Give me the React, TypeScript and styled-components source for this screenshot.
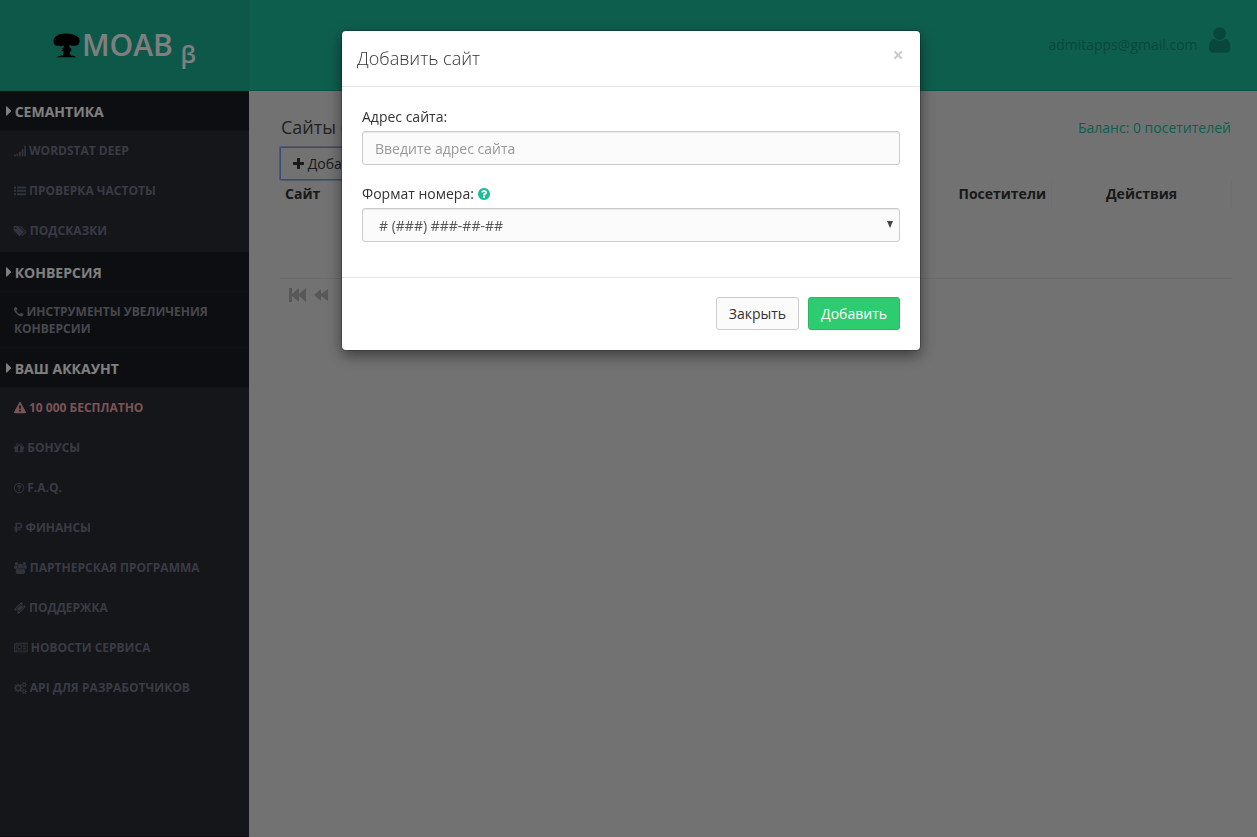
import React from "react";
import styled, { createGlobalStyle } from "styled-components";

const GlobalStyle = createGlobalStyle`
  * { box-sizing: border-box; }
  body {
    margin: 0;
    background: #e5e5e5;
    color: #333;
    font-family: "Open Sans", "Noto Sans", sans-serif;
    font-size: 14px;
    line-height: 20px;
  }
  button, input, select { font: inherit; }
`;

/* ---------- icons ---------- */

type Glyph = { x?: number; w: number; d: string };

const glyphs: Record<string, Glyph> = {
  signal: {
    w: 1792,
    d: "M0 1408h256v256h-256zM384 1280h256v384h-256zM768 1024h256v640h-256zM1152 640h256v1024h-256zM1536 128h256v1536h-256z",
  },
  list: {
    w: 1792,
    d: "M0 224h300v300h-300zM448 224h1344v300h-1344zM0 722h300v300h-300zM448 722h1344v300h-1344zM0 1220h300v300h-300zM448 1220h1344v300h-1344z",
  },
  tags: {
    w: 1920,
    d: "M384 448q0-53-37.5-90.5t-90.5-37.5-90.5 37.5-37.5 90.5 37.5 90.5 90.5 37.5 90.5-37.5 37.5-90.5zm1067 576q0 53-37 90l-491 492q-39 37-91 37-53 0-90-37l-715-716q-38-37-64.5-101t-26.5-117v-416q0-52 38-90t90-38h416q53 0 117 26.5t102 64.5l715 714q37 39 37 91zm384 0q0 53-37 90l-491 492q-39 37-91 37-36 0-59-14t-53-45l470-470q37-37 37-90 0-52-37-91l-715-714q-38-38-102-64.5t-117-26.5h224q53 0 117 26.5t102 64.5l715 714q37 39 37 91z",
  },
  caret: {
    x: 576,
    w: 640,
    d: "M1152 896q0 26-19 45l-448 448q-19 19-45 19t-45-19-19-45v-896q0-26 19-45t45-19 45 19l448 448q19 19 19 45z",
  },
  phone: {
    x: 192,
    w: 1408,
    d: "M1600 1240q0 27-10 70.5t-21 68.5q-21 50-122 106-94 51-186 51-27 0-53-3.5t-57.5-12.5-47-14.5-55.5-20.5-49-18q-98-35-175-83-127-79-264-216t-216-264q-48-77-83-175-3-9-18-49t-20.5-55.5-14.5-47-12.5-57.5-3.5-53q0-92 51-186 56-101 106-122 25-11 68.5-21t70.5-10q14 0 21 3 18 6 53 76 11 19 30 54t35 63.5 31 53.5q3 4 17.5 25t21.5 35.5 7 28.5q0 20-28.5 50t-62 55-62 53-28.5 46q0 9 5 22.5t8.5 20.5 14 24 11.5 19q76 137 174 235t235 174q2 1 19 11.5t24 14 20.5 8.5 22.5 5q18 0 46-28.5t53-62 55-62 50-28.5q14 0 28.5 7t35.5 21.5 25 17.5q25 15 53.5 31t63.5 35 54 30q70 35 76 53 3 7 3 21z",
  },
  warning: {
    w: 1792,
    d: "M1024 1375v-190q0-14-9.5-23.5t-22.5-9.5h-192q-13 0-22.5 9.5t-9.5 23.5v190q0 14 9.5 23.5t22.5 9.5h192q13 0 22.5-9.5t9.5-23.5zm-2-374l18-459q0-12-10-19-13-11-24-11h-220q-11 0-24 11-10 7-10 21l17 457q0 10 10 16.5t24 6.5h185q14 0 23.5-6.5t10.5-16.5zm-14-934l768 1408q35 63-2 126-17 29-46.5 46t-63.5 17h-1536q-34 0-63.5-17t-46.5-46q-37-63-2-126l768-1408q17-31 47-49t65-18 65 18 47 49z",
  },
  gift: {
    x: 128,
    w: 1536,
    d: "M1056 1356v-716h-320v716q0 25 18 38.5t46 13.5h192q28 0 46-13.5t18-38.5zm-456-844h195l-126-161q-26-31-69-31-40 0-68 28t-28 68 28 68 68 28zm688-96q0-40-28-68t-68-28q-43 0-69 31l-125 161h194q40 0 68-28t28-68zm376 256v320q0 14-9 23t-23 9h-96v416q0 40-28 68t-68 28h-1088q-40 0-68-28t-28-68v-416h-96q-14 0-23-9t-9-23v-320q0-14 9-23t23-9h440q-93 0-158.5-65.5t-65.5-158.5 65.5-158.5 158.5-65.5q107 0 168 77l128 165 128-165q61-77 168-77 93 0 158.5 65.5t65.5 158.5-65.5 158.5-158.5 65.5h440q14 0 23 9t9 23z",
  },
  questionOutline: {
    x: 128,
    w: 1536,
    d: "M896 128a768 768 0 1 0 0 1536a768 768 0 1 0 0-1536zm0 128a640 640 0 1 1 0 1280a640 640 0 1 1 0-1280zM800 1184h192v192h-192zM576 660q100-232 340-232 130 0 215 76t85 180q0 130-130 204-84 44-84 92v94h-212v-110q0-110 120-176 90-46 90-94 0-72-94-72-90 0-154 152z",
  },
  question: {
    x: 128,
    w: 1536,
    d: "M1024 1376v-192q0-14-9-23t-23-9h-192q-14 0-23 9t-9 23v192q0 14 9 23t23 9h192q14 0 23-9t9-23zm256-672q0-88-55.5-163t-138.5-116-170-41q-243 0-371 213-15 24 8 42l132 100q7 6 19 6 16 0 25-12 53-68 86-92 34-24 86-24 48 0 85.5 26t37.5 59q0 38-20 61t-68 45q-63 28-115.5 86.5t-52.5 125.5v36q0 14 9 23t23 9h192q14 0 23-9t9-23q0-19 21.5-49.5t54.5-49.5q32-18 49-28.5t46-35 44.5-48 28-60.5 12.5-81zm384 192q0 209-103 385.5t-279.5 279.5-385.5 103-385.5-103-279.5-279.5-103-385.5 103-385.5 279.5-279.5 385.5-103 385.5 103 279.5 279.5 103 385.5z",
  },
  ruble: {
    w: 1280,
    d: "M210 128h620a410 410 0 0 1 0 840h-350v100h490v180h-490v318h-270v-318h-210v-180h210v-100h-210v-200h210zM480 328v440h320a220 220 0 0 0 0-440z",
  },
  users: {
    w: 1920,
    d: "M593 896q-162 5-265 128h-134q-82 0-138-40.5t-56-118.5q0-353 124-353 6 0 43.5 21t97.5 42.5 119 21.5q67 0 133-23-5 37-5 66 0 159 81 292zm1071 637q0 120-73 189.5t-194 69.5h-874q-121 0-194-69.5t-73-189.5q0-53 3.5-103.5t14-109 26.5-108.5 43-97.5 62-81 85.5-53.5 111.5-20q10 0 43 21.5t73 48 107 48 135 21.5 135-21.5 107-48 73-48 43-21.5q61 0 111.5 20t85.5 53.5 62 81 43 97.5 26.5 108.5 14 109 3.5 103.5zm-1024-1277q0 106-75 181t-181 75-181-75-75-181 75-181 181-75 181 75 75 181zm704 384q0 159-112.5 271.5t-271.5 112.5-271.5-112.5-112.5-271.5 112.5-271.5 271.5-112.5 271.5 112.5 112.5 271.5zm576 225q0 78-56 118.5t-138 40.5h-134q-103-123-265-128 81-133 81-292 0-29-5-66 66 23 133 23 59 0 119-21.5t97.5-42.5 43.5-21q124 0 124 353zm-128-609q0 106-75 181t-181 75-181-75-75-181 75-181 181-75 181 75 75 181z",
  },
  ticket: {
    w: 1792,
    d: "M1024 452l316 316-572 572-316-316zm-211 979l618-618q19-19 19-45t-19-45l-362-362q-18-18-45-18t-45 18l-618 618q-19 19-19 45t19 45l362 362q18 18 45 18t45-18zm889-637l-907 908q-37 37-90.5 37t-90.5-37l-126-126q56-56 56-136t-56-136-136-56-136 56l-125-126q-37-37-37-90.5t37-90.5l907-906q37-37 90.5-37t90.5 37l125 125q-56 56-56 136t56 136 136 56 136-56l126 125q37 37 37 90.5t-37 90.5z",
  },
  newspaper: {
    w: 2048,
    d: "M1024 512h-384v384h384v-384zm128 640v128h-640v-128h640zm0-768v640h-640v-640h640zm640 768v128h-512v-128h512zm0-256v128h-512v-128h512zm0-256v128h-512v-128h512zm0-256v128h-512v-128h512zm-1536 960v-960h-128v960q0 26 19 45t45 19 45-19 19-45zm1664 0v-1088h-1536v1088q0 33-11 64h1483q26 0 45-19t19-45zm128-1216v1216q0 80-56 136t-136 56h-1664q-80 0-136-56t-56-136v-1088h256v-128h1792z",
  },
  cogs: {
    w: 1920,
    d: "M896 896q0-106-75-181t-181-75-181 75-75 181 75 181 181 75 181-75 75-181zm768 512q0-52-38-90t-90-38-90 38-38 90q0 53 37.5 90.5t90.5 37.5 90.5-37.5 37.5-90.5zm0-1024q0-52-38-90t-90-38-90 38-38 90q0 53 37.5 90.5t90.5 37.5 90.5-37.5 37.5-90.5zm-384 421v185q0 10-7 19.5t-16 10.5l-155 24q-11 35-32 76 34 48 90 115 7 11 7 20 0 12-7 19-23 30-82.5 89.5t-78.5 59.5q-11 0-21-7l-115-90q-37 19-77 31-11 108-23 155-7 24-30 24h-186q-11 0-20-7.5t-10-17.5l-23-153q-34-10-75-31l-118 89q-7 7-20 7-11 0-21-8-144-133-144-160 0-9 7-19 10-14 41-53t47-61q-23-44-35-82l-152-24q-10-1-17-9.5t-7-19.5v-185q0-10 7-19.5t16-10.5l155-24q11-35 32-76-34-48-90-115-7-11-7-20 0-12 7-20 22-30 82-89t79-59q11 0 21 7l115 90q34-18 77-32 11-108 23-154 7-24 30-24h186q11 0 20 7.5t10 17.5l23 153q34 10 75 31l118-89q8-7 20-7 11 0 21 8 144 133 144 160 0 8-7 19-12 16-42 54t-45 60q23 48 34 82l152 23q10 2 17 10.5t7 19.5zm640 533v140q0 16-149 31-12 27-30 52 51 113 51 138 0 4-4 7-122 71-124 71-8 0-46-47t-52-68q-20 2-30 2t-30-2q-14 21-52 68t-46 47q-2 0-124-71-4-3-4-7 0-25 51-138-18-25-30-52-149-15-149-31v-140q0-16 149-31 13-29 30-52-51-113-51-138 0-4 4-7 4-2 35-20t59-34 30-16q8 0 46 46.5t52 67.5q20-2 30-2t30 2q51-71 92-112l6-2q4 0 124 70 4 3 4 7 0 25-51 138 17 23 30 52 149 15 149 31zm0-1024v140q0 16-149 31-12 27-30 52 51 113 51 138 0 4-4 7-122 71-124 71-8 0-46-47t-52-68q-20 2-30 2t-30-2q-14 21-52 68t-46 47q-2 0-124-71-4-3-4-7 0-25 51-138-18-25-30-52-149-15-149-31v-140q0-16 149-31 13-29 30-52-51-113-51-138 0-4 4-7 4-2 35-20t59-34 30-16q8 0 46 46.5t52 67.5q20-2 30-2t30 2q51-71 92-112l6-2q4 0 124 70 4 3 4 7 0 25-51 138 17 23 30 52 149 15 149 31z",
  },
  plus: {
    x: 192,
    w: 1408,
    d: "M1600 736v192q0 40-28 68t-68 28h-416v416q0 40-28 68t-68 28h-192q-40 0-68-28t-28-68v-416h-416q-40 0-68-28t-28-68v-192q0-40 28-68t68-28h416v-416q0-40 28-68t68-28h192q40 0 68 28t28 68v416h416q40 0 68 28t28 68z",
  },
  user: {
    x: 256,
    w: 1280,
    d: "M1536 1399q0 109-62.5 187t-150.5 78h-854q-88 0-150.5-78t-62.5-187q0-85 8.5-160.5t31.5-152 58.5-131 94-89 134.5-34.5q131 128 313 128t313-128q76 0 134.5 34.5t94 89 58.5 131 31.5 152 8.5 160.5zm-256-887q0 159-112.5 271.5t-271.5 112.5-271.5-112.5-112.5-271.5 112.5-271.5 271.5-112.5 271.5 112.5 112.5 271.5z",
  },
};

const Svg = styled.svg<{ $size: number }>`
  height: ${(p) => p.$size}px;
  fill: currentColor;
  vertical-align: -2px;
  overflow: visible;
`;

function Icon({ name, size = 14 }: { name: string; size?: number }) {
  const g = glyphs[name];
  return (
    <Svg $size={size} viewBox={`${g.x ?? 0} 0 ${g.w} 1792`} aria-hidden="true">
      <path fillRule="evenodd" d={g.d} />
    </Svg>
  );
}

/* ---------- page frame ---------- */

const Page = styled.div`
  display: grid;
  grid-template-columns: 249px minmax(0, 1fr);
  grid-template-rows: 91px 1fr;
  min-height: 100vh;
`;

const Brand = styled.a`
  display: flex;
  align-items: center;
  justify-content: center;
  background: #1cb092;
  border-bottom: 1px solid #1aa88b;
  color: #fff;
  font-size: 30px;
  font-weight: 600;
  text-decoration: none;

  sub {
    font-size: 24px;
    line-height: 0;
  }
  svg { margin-right: 2px; }
`;

const Header = styled.header`
  display: flex;
  align-items: center;
  justify-content: flex-end;
  gap: 11px;
  padding: 0 27px 10px;
  background: #1cbd9d;
  border-bottom: 1px solid #18a689;
  color: #148f77;

  a {
    padding-top: 9px;
    color: inherit;
    text-decoration: none;
  }
`;

const Sidebar = styled.nav`
  background: #282c32;
  border-bottom: 1px solid #241a24;
`;

const SectionTitle = styled.h2`
  margin: 0;
  height: 40px;
  padding: 0 6px;
  background: #1b1d23;
  border-bottom: 1px solid #23262c;
  color: #fff;
  font-size: 14px;
  font-weight: 700;
  line-height: 42px;
  text-transform: uppercase;

  svg { margin-right: 3px; }
`;

const Menu = styled.ul<{ $dark?: boolean }>`
  margin: 0;
  padding: 0;
  list-style: none;
  background: ${(p) => (p.$dark ? "#1b1d23" : "transparent")};
  border-bottom: 1px solid ${(p) => (p.$dark ? "#23262c" : "transparent")};
`;

const MenuLink = styled.a<{ $tone?: "alert" | "soft" }>`
  display: block;
  padding: 11px 14px ${(p) => (p.$tone === "soft" ? 10 : 11)}px;
  color: ${(p) => (p.$tone === "alert" ? "#f4a6ae" : p.$tone === "soft" ? "#8d909d" : "#72768c")};
  font-size: 12px;
  font-weight: 700;
  line-height: ${(p) => (p.$tone === "soft" ? 17 : 18)}px;
  text-decoration: none;
  text-transform: uppercase;

  svg {
    margin-right: 3px;
    opacity: ${(p) => (p.$tone ? 1 : 0.8)};
  }
`;

/* ---------- content ---------- */

const Content = styled.main`
  padding: 21px 25px 0 31px;
`;

const TitleRow = styled.div`
  display: flex;
  align-items: flex-end;
  justify-content: space-between;
  height: 26px;
  margin-bottom: 9px;
  padding: 0 1px;

  a {
    color: #1abc9c;
    text-decoration: none;
  }
`;

const PageTitle = styled.h1`
  margin: 0;
  font-size: 18px;
  font-weight: 400;
  line-height: 22px;
  color: #444;
`;

const Button = styled.button<{ $kind?: "primary" | "focused" }>`
  height: 33px;
  padding: 0 12px;
  border: 1px solid ${(p) => (p.$kind === "primary" ? "#29b765" : p.$kind === "focused" ? "#7199e6" : "#ccc")};
  border-radius: ${(p) => (p.$kind === "focused" ? 1 : 3)}px;
  background: ${(p) => (p.$kind === "primary" ? "#2ecc71" : p.$kind === "focused" ? "#e5e5e5" : "#fbfbfb")};
  box-shadow: ${(p) => (p.$kind === "focused" ? "0 0 0 1px #a5b6d8" : "none")};
  color: ${(p) => (p.$kind === "primary" ? "#fff" : "#333")};
`;

const Sites = styled.table`
  width: 100%;
  border-collapse: collapse;
  border-bottom: 1px solid #d8d8d8;

  th {
    height: 28px;
    padding: 0 5px;
    border-right: 1px solid #dcdcdc;
    font-weight: 700;
  }
  th:first-child { text-align: left; }
  th:nth-child(1) { border-right: 0; }
  th:nth-child(2) { width: 98px; border-left: 0; }
  th:nth-child(3) { width: 180px; }
  td { height: 70px; }
`;

const Pager = styled.div`
  display: flex;
  gap: 8px;
  padding: 8px 9px;

  button {
    display: flex;
    padding: 0;
    border: 0;
    background: none;
    color: #b0b0b0;
  }
`;

/* ---------- dialog ---------- */

const Backdrop = styled.div`
  position: fixed;
  inset: 0;
  display: flex;
  justify-content: center;
  align-items: flex-start;
  padding: 31px 0 0 5px;
  background: rgba(0, 0, 0, 0.5);
`;

const Dialog = styled.section`
  width: 100%;
  max-width: 578px;
  border-radius: 4px;
  background: #fff;
  box-shadow: 0 5px 15px rgba(0, 0, 0, 0.5), 0 0 0 1px rgba(0, 0, 0, 0.2);
`;

const DialogHead = styled.header`
  display: flex;
  justify-content: space-between;
  align-items: center;
  padding: 15px;
  border-bottom: 1px solid #e5e5e5;

  h2 {
    margin: 0;
    font-size: 18px;
    font-weight: 300;
    line-height: 25px;
  }
  button {
    padding: 0 1px 8px;
    border: 0;
    background: none;
    color: #ccc;
    font-size: 20px;
    font-weight: 700;
    line-height: 17px;
  }
`;

const DialogBody = styled.form`
  display: flex;
  flex-direction: column;
  gap: 19px;
  padding: 20px 20px 35px;
`;

const Field = styled.div`
  display: flex;
  flex-direction: column;
  gap: 4px;
`;

const control = `
  display: block;
  width: 100%;
  height: 34px;
  border: 1px solid #ccc;
  border-radius: 3px;
  background: #fbfbfb;
  box-shadow: inset 0 1px 1px rgba(0, 0, 0, 0.08);
  color: #555;
`;

const TextInput = styled.input`
  ${control}
  padding: 0 12px;
  &::placeholder { color: #999; }
`;

const SelectBox = styled.div`
  position: relative;

  select {
    ${control}
    appearance: none;
    padding: 2px 16px 0;
  }
  svg {
    position: absolute;
    right: 7px;
    top: 13px;
    pointer-events: none;
  }
`;

const Help = styled.span`
  color: #1abc9c;
`;

const DialogFoot = styled.footer`
  display: flex;
  justify-content: flex-end;
  gap: 9px;
  padding: 19px 20px 20px;
  border-top: 1px solid #e5e5e5;
`;

const services = [
  { icon: "signal", text: "Wordstat Deep" },
  { icon: "list", text: "Проверка частоты" },
  { icon: "tags", text: "Подсказки" },
];

const account: { icon: string; text: string; alert?: boolean }[] = [
  { icon: "warning", text: "10 000 бесплатно", alert: true },
  { icon: "gift", text: "Бонусы" },
  { icon: "questionOutline", text: "F.A.Q." },
  { icon: "ruble", text: "Финансы" },
  { icon: "users", text: "Партнерская программа" },
  { icon: "ticket", text: "Поддержка" },
  { icon: "newspaper", text: "Новости сервиса" },
  { icon: "cogs", text: "API для разработчиков" },
];

export default function App() {
  return (
    <>
      <GlobalStyle />
      <Page>
        <Brand href="#">
          <svg width="27" height="25" viewBox="0 0 27 25" fill="#000" aria-hidden="true">
            <path d="M13.500 0.500C18 0.500 21 1.500 23.500 3C26 4 26.800 6 26.500 8.500C26.500 11 24.500 13 22 12.500C20 13.500 18 12.500 16.500 12C16.300 13.500 16.500 14.500 17 15L19 16L17 16.700L19.200 18L16.800 18.500C16.900 20.500 17.200 21.500 18 22.500C21 22.800 23 23.300 23.300 24.300H3.700C4 23.300 6.500 22.800 9.500 22.500C10.500 21.500 10.700 20 10.700 18.500L8 17.500L10.600 16.700L8.500 15.500L10.500 15C11 14 10.800 13 10.600 12.200C9 13.200 7 13.500 5.500 12.600C3 13.500 0.500 11.500 0.500 9C0.200 6.500 1 4.500 3.500 3C6 1.200 9 0.500 13.500 0.500Z" />
          </svg>
          <span>
            MOAB <sub>β</sub>
          </span>
        </Brand>
        <Header>
          <a href="#">admitapps@gmail.com</a>
          <Icon name="user" size={30} />
        </Header>

        <Sidebar>
          <SectionTitle><Icon name="caret" size={16} />Семантика</SectionTitle>
          <Menu>
            {services.map((s) => (
              <li key={s.text}>
                <MenuLink href="#"><Icon name={s.icon} size={12} />{s.text}</MenuLink>
              </li>
            ))}
          </Menu>
          <SectionTitle><Icon name="caret" size={16} />Конверсия</SectionTitle>
          <Menu $dark>
            <li>
              <MenuLink href="#" $tone="soft"><Icon name="phone" size={12} />Инструменты увеличения конверсии</MenuLink>
            </li>
          </Menu>
          <SectionTitle><Icon name="caret" size={16} />Ваш аккаунт</SectionTitle>
          <Menu>
            {account.map((s) => (
              <li key={s.text}>
                <MenuLink href="#" $tone={s.alert ? "alert" : undefined}><Icon name={s.icon} size={12} />{s.text}</MenuLink>
              </li>
            ))}
          </Menu>
        </Sidebar>

        <Content>
          <TitleRow>
            <PageTitle>Сайты с</PageTitle>
            <a href="#">Баланс: 0 посетителей</a>
          </TitleRow>
          <Button type="button" $kind="focused"><Icon name="plus" /> Добавить</Button>
          <Sites>
            <thead>
              <tr><th>Сайт</th><th>Посетители</th><th>Действия</th></tr>
            </thead>
            <tbody>
              <tr><td colSpan={3} /></tr>
            </tbody>
          </Sites>
          <Pager>
            <button type="button" aria-label="Первая страница">
              <svg width="17" height="16" viewBox="0 0 17 16" fill="currentColor"><path d="M0 1h3v6l7-6v6l7-6v14l-7-6v6l-7-6v6h-3z" /></svg>
            </button>
            <button type="button" aria-label="Предыдущая страница">
              <svg width="15" height="16" viewBox="0 0 15 16" fill="currentColor"><path d="M0 8l7-6v5l7-5v12l-7-5v5z" /></svg>
            </button>
          </Pager>
        </Content>
      </Page>

      <Backdrop>
        <Dialog role="dialog" aria-modal="true" aria-labelledby="dialog-title">
          <DialogHead>
            <h2 id="dialog-title">Добавить сайт</h2>
            <button type="button" aria-label="Закрыть окно">×</button>
          </DialogHead>
          <DialogBody id="site-form">
            <Field>
              <label htmlFor="address">Адрес сайта:</label>
              <TextInput id="address" placeholder="Введите адрес сайта" />
            </Field>
            <Field>
              <label htmlFor="format">Формат номера: <Help><Icon name="question" /></Help></label>
              <SelectBox>
                <select id="format">
                  <option># (###) ###-##-##</option>
                </select>
                <svg width="6" height="7" viewBox="0 0 6 7" fill="#444" aria-hidden="true"><path d="M0 0h6l-3 7z" /></svg>
              </SelectBox>
            </Field>
          </DialogBody>
          <DialogFoot>
            <Button type="button">Закрыть</Button>
            <Button type="submit" form="site-form" $kind="primary">Добавить</Button>
          </DialogFoot>
        </Dialog>
      </Backdrop>
    </>
  );
}
